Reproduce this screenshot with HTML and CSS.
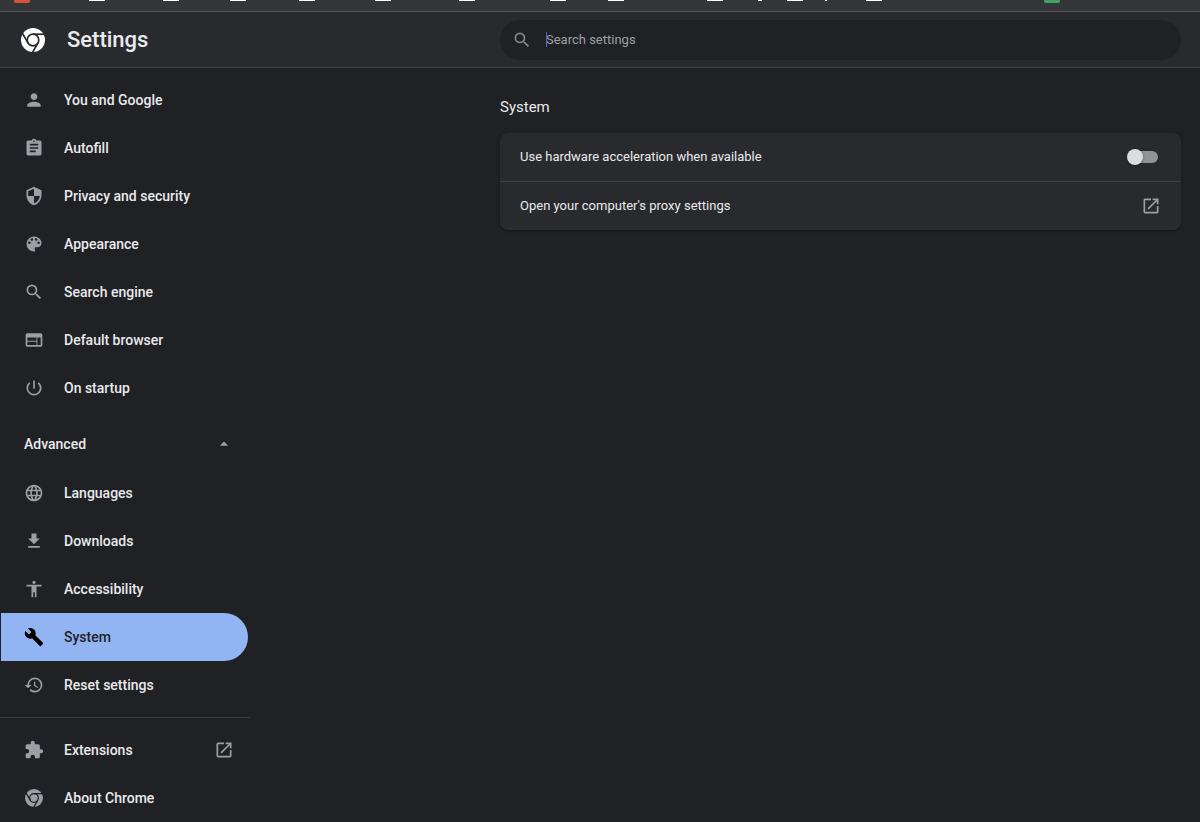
FILE: index.html
```
<!DOCTYPE html>
<html lang="en">
<head>
<meta charset="utf-8">
<meta name="viewport" content="width=device-width, initial-scale=1">
<title>Settings</title>
<link rel="stylesheet" href="styles.css">
</head>

<body>
<svg class="defs" aria-hidden="true">
	<symbol id="chrome" viewBox="0 0 24 24">
		<circle cx="12" cy="12" r="12"/>
		<g class="cut">
			<circle cx="12" cy="12" r="5.8"/>
			<path d="M12 6.2H24"/>
			<path d="M12 6.2H24" transform="rotate(120 12 12)"/>
			<path d="M12 6.2H24" transform="rotate(240 12 12)"/>
		</g>
	</symbol>
	<symbol id="search" viewBox="0 0 24 24">
		<path d="M15.5 14h-.79l-.28-.27A6.47 6.47 0 0 0 16 9.5 6.5 6.5 0 1 0 9.5 16c1.61 0 3.09-.59 4.23-1.57l.27.28v.79l5 4.99L20.49 19l-4.99-5zm-6 0C7.01 14 5 11.99 5 9.5S7.01 5 9.5 5 14 7.01 14 9.5 11.99 14 9.5 14z"/>
	</symbol>
	<symbol id="open" viewBox="0 0 24 24">
		<path d="M19 19H5V5h7V3H5a2 2 0 0 0-2 2v14a2 2 0 0 0 2 2h14c1.1 0 2-.9 2-2v-7h-2v7zM14 3v2h3.59l-9.83 9.83 1.41 1.41L19 6.41V10h2V3h-7z"/>
	</symbol>
</svg>

<div class="bookmarks">
	<i class="red"></i><i></i><i></i><i></i><i></i><i></i><i></i><i></i><i></i><i></i><i class="dot"></i><i></i><i class="speck"></i><i></i><i class="green"></i>
</div>

<header class="toolbar">
	<div class="brand">
		<svg class="logo"><use href="#chrome"/></svg>
		<h1>Settings</h1>
	</div>
	<label class="search">
		<svg class="icon"><use href="#search"/></svg>
		<span class="caret"></span>
		<input type="text" placeholder="Search settings" aria-label="Search settings">
	</label>
</header>

<div class="container">
	<nav class="menu">
		<a href="#people"><svg class="icon" viewBox="0 0 24 24"><path d="M12 12c2.21 0 4-1.79 4-4s-1.79-4-4-4-4 1.79-4 4 1.79 4 4 4zm0 2c-2.67 0-8 1.34-8 4v2h16v-2c0-2.66-5.33-4-8-4z"/></svg>You and Google</a>
		<a href="#autofill"><svg class="icon" viewBox="0 0 24 24"><path d="M19 3h-4.18C14.4 1.84 13.3 1 12 1s-2.4.84-2.82 2H5c-1.1 0-2 .9-2 2v14c0 1.1.9 2 2 2h14c1.1 0 2-.9 2-2V5c0-1.1-.9-2-2-2zm-7 0c.55 0 1 .45 1 1s-.45 1-1 1-1-.45-1-1 .45-1 1-1zm2 14H7v-2h7v2zm3-4H7v-2h10v2zm0-4H7V7h10v2z"/></svg>Autofill</a>
		<a href="#privacy"><svg class="icon" viewBox="0 0 24 24"><path d="M12 1 3 5v6c0 5.55 3.84 10.74 9 12 5.16-1.26 9-6.45 9-12V5l-9-4zm0 10.99h7c-.53 4.12-3.28 7.79-7 8.94V12H5V6.3l7-3.11v8.8z"/></svg>Privacy and security</a>
		<a href="#appearance"><svg class="icon" viewBox="0 0 24 24"><path d="M12 3a9 9 0 0 0 0 18c.83 0 1.5-.67 1.5-1.5 0-.39-.15-.74-.39-1.01-.23-.26-.38-.61-.38-.99 0-.83.67-1.5 1.5-1.5H16c2.76 0 5-2.24 5-5 0-4.42-4.03-8-9-8zm-5.5 9c-.83 0-1.5-.67-1.5-1.5S5.67 9 6.5 9 8 9.67 8 10.5 7.33 12 6.5 12zm3-4C8.67 8 8 7.33 8 6.5S8.67 5 9.5 5s1.5.67 1.5 1.5S10.33 8 9.5 8zm5 0c-.83 0-1.5-.67-1.5-1.5S13.67 5 14.5 5s1.5.67 1.5 1.5S15.33 8 14.5 8zm3 4c-.83 0-1.5-.67-1.5-1.5S16.67 9 17.5 9s1.5.67 1.5 1.5-.67 1.5-1.5 1.5z"/></svg>Appearance</a>
		<a href="#search-engine"><svg class="icon"><use href="#search"/></svg>Search engine</a>
		<a href="#default-browser"><svg class="icon" viewBox="0 0 24 24"><path d="M20 4H4c-1.1 0-1.99.9-1.99 2L2 18c0 1.1.9 2 2 2h16c1.1 0 2-.9 2-2V6c0-1.1-.9-2-2-2zm-5 14H4v-4h11v4zm0-5H4V9h11v4zm5 5h-4V9h4v9z"/></svg>Default browser</a>
		<a href="#on-startup"><svg class="icon" viewBox="0 0 24 24"><path d="M13 3h-2v10h2V3zm4.83 2.17-1.42 1.42A6.92 6.92 0 0 1 19 12a7 7 0 1 1-11.42-5.42L6.17 5.17A8.93 8.93 0 0 0 3 12a9 9 0 1 0 14.83-6.83z"/></svg>On startup</a>

		<button type="button" class="advanced" aria-expanded="true">Advanced<svg class="icon" viewBox="0 0 24 24"><path d="m7 14 5-5 5 5z"/></svg></button>

		<a href="#languages"><svg class="icon" viewBox="0 0 24 24"><path d="M11.99 2C6.47 2 2 6.48 2 12s4.47 10 9.99 10C17.52 22 22 17.52 22 12S17.52 2 11.99 2zm6.93 6h-2.95a15.65 15.65 0 0 0-1.38-3.56A8.03 8.03 0 0 1 18.92 8zM12 4.04c.83 1.2 1.48 2.53 1.91 3.96h-3.82c.43-1.43 1.08-2.76 1.91-3.96zM4.26 14C4.1 13.36 4 12.69 4 12s.1-1.36.26-2h3.38c-.08.66-.14 1.32-.14 2s.06 1.34.14 2H4.26zm.82 2h2.95c.32 1.25.78 2.45 1.38 3.56A7.99 7.99 0 0 1 5.08 16zm2.95-8H5.08a7.99 7.99 0 0 1 4.33-3.56A15.65 15.65 0 0 0 8.03 8zM12 19.96c-.83-1.2-1.48-2.53-1.91-3.96h3.82c-.43 1.43-1.08 2.76-1.91 3.96zM14.34 14H9.66c-.09-.66-.16-1.32-.16-2s.07-1.35.16-2h4.68c.09.65.16 1.32.16 2s-.07 1.34-.16 2zm.25 5.56c.6-1.11 1.06-2.31 1.38-3.56h2.95a8.03 8.03 0 0 1-4.33 3.56zM16.36 14c.08-.66.14-1.32.14-2s-.06-1.34-.14-2h3.38c.16.64.26 1.31.26 2s-.1 1.36-.26 2h-3.38z"/></svg>Languages</a>
		<a href="#downloads"><svg class="icon" viewBox="0 0 24 24"><path d="M19 9h-4V3H9v6H5l7 7 7-7zM5 18v2h14v-2H5z"/></svg>Downloads</a>
		<a href="#accessibility"><svg class="icon" viewBox="0 0 24 24"><path d="M12 2c1.1 0 2 .9 2 2s-.9 2-2 2-2-.9-2-2 .9-2 2-2zm9 7h-6v13h-2v-6h-2v6H9V9H3V7h18v2z"/></svg>Accessibility</a>
		<a href="#system" class="selected" aria-current="page"><svg class="icon" viewBox="0 0 24 24"><path d="m22.7 19-9.1-9.1c.9-2.3.4-5-1.5-6.9-2-2-5-2.4-7.4-1.3L9 6 6 9 1.6 4.7C.4 7.1.9 10.1 2.9 12.1c1.9 1.9 4.6 2.4 6.9 1.5l9.1 9.1c.4.4 1 .4 1.4 0l2.3-2.3c.5-.4.5-1.1.1-1.4z"/></svg>System</a>
		<a href="#reset"><svg class="icon" viewBox="0 0 24 24"><path d="M13 3a9 9 0 0 0-9 9H1l3.89 3.89.07.14L9 12H6a7 7 0 1 1 2.06 4.94l-1.42 1.42A9 9 0 1 0 13 3zm-1 5v5l4.28 2.54.72-1.21-3.5-2.08V8H12z"/></svg>Reset settings</a>

		<hr>

		<a href="#extensions"><svg class="icon" viewBox="0 0 24 24"><path d="M20.5 11H19V7c0-1.1-.9-2-2-2h-4V3.5a2.5 2.5 0 0 0-5 0V5H4c-1.1 0-1.99.9-1.99 2v3.8H3.5c1.49 0 2.7 1.21 2.7 2.7s-1.21 2.7-2.7 2.7H2V20c0 1.1.9 2 2 2h3.8v-1.5c0-1.49 1.21-2.7 2.7-2.7s2.7 1.21 2.7 2.7V22H17c1.1 0 2-.9 2-2v-4h1.5a2.5 2.5 0 0 0 0-5z"/></svg>Extensions<svg class="icon end"><use href="#open"/></svg></a>
		<a href="#about"><svg class="icon small"><use href="#chrome"/></svg>About Chrome</a>
	</nav>

	<main class="page">
		<h2>System</h2>
		<div class="card">
			<label class="row">
				<span>Use hardware acceleration when available</span>
				<input type="checkbox" class="toggle" role="switch">
			</label>
			<a href="#proxy" class="row">
				<span>Open your computer's proxy settings</span>
				<svg class="icon"><use href="#open"/></svg>
			</a>
		</div>
	</main>
</div>
</body>
</html>
```
FILE: styles.css
```
*{box-sizing:border-box; margin:0; padding:0;}
body{background:#202124; color:#e8eaed; font:14px/20px Roboto, "Liberation Sans", sans-serif;}
a{color:inherit; text-decoration:none;}
.defs{display:none;}
.icon{width:20px; height:20px; fill:#9aa0a6; flex:none;}
.cut{fill:none; stroke:var(--cut,#202124); stroke-width:1.7;}

/* lower edge of the bookmarks bar */
.bookmarks{display:grid; grid-template-columns:75px 74px 67px 69px 76px 84px 91px 58px 99px 51px 29px 38px 41px 178px 1fr; height:12px; padding-left:14px; background:#35363a; border-bottom:1px solid #55565a; overflow:hidden;}
.bookmarks i{width:16px; height:1px; background:#fff;}
.bookmarks .red{height:3px; background:#d9513c; border-radius:0 0 2px 2px;}
.bookmarks .green{height:3px; background:#3fa463; border-radius:0 0 2px 2px;}
.bookmarks .dot{width:4px;}
.bookmarks .speck{width:2px;}

.toolbar,.container{display:grid; grid-template-columns:minmax(266px,1fr) minmax(0,681px); padding-right:19px;}
.toolbar{height:56px; align-items:center; background:#292a2d; border-bottom:1px solid #3c3d41;}
.brand{display:flex; align-items:center; gap:22px; padding-left:21px;}
.logo{--cut:#292a2d; width:24px; height:24px; fill:#fff;}
.brand h1{font-size:22px; line-height:28px; font-weight:500;}
.search{display:flex; align-items:center; height:40px; padding:0 12px; background:#202124; border-radius:20px;}
.search .icon{fill:#80868b;}
.search input{flex:1; min-width:0; border:0; outline:0; background:none; color:#e8eaed; font:13px/20px Roboto, "Liberation Sans", sans-serif;}
.search input::placeholder{color:#9aa0a6; opacity:1;}
.caret{width:1px; height:15px; margin:0 -1px 0 14px; background:#3b6fd0;}

.menu{width:250px; padding-top:8px;}
.menu a,.advanced{display:flex; align-items:center; height:48px; padding:0 16px 0 24px; font-weight:500;}
.menu a{gap:20px;}
.menu .end{margin-left:auto;}
.menu .selected{margin:0 2px 0 1px; padding-left:23px; background:#93b4f3; color:#202124; border-radius:0 24px 24px 0;}
.menu .selected .icon{fill:#000;}
.menu .small{padding:1px;}
.advanced{width:100%; margin:8px 0 1px; border:0; background:none; color:inherit; font-family:inherit; font-size:14px; justify-content:space-between;}
.menu hr{margin:8px 0; border:0; border-top:1px solid #3c3d41;}

.page{padding-top:29px;}
.page h2{font-size:15px; line-height:20px; font-weight:400;}
.card{margin-top:16px; background:#292a2d; border-radius:8px; box-shadow:0 1px 3px rgba(0,0,0,.4);}
.row{display:flex; align-items:center; justify-content:space-between; height:48px; padding:0 20px; font-size:13px;}
.row + .row{height:49px; border-top:1px solid #3f4044;}
.toggle{appearance:none; display:flex; align-items:center; width:28px; height:12px; margin-right:3px; border-radius:6px; background:#8f9596;}
.toggle:before{content:""; width:16px; height:16px; margin-left:-3px; flex:none; border-radius:50%; background:#dadce0; box-shadow:0 1px 3px rgba(0,0,0,.4);}
.toggle:checked{background:#5f7fb5; justify-content:flex-end;}
.toggle:checked:before{background:#8ab4f8;}
```
